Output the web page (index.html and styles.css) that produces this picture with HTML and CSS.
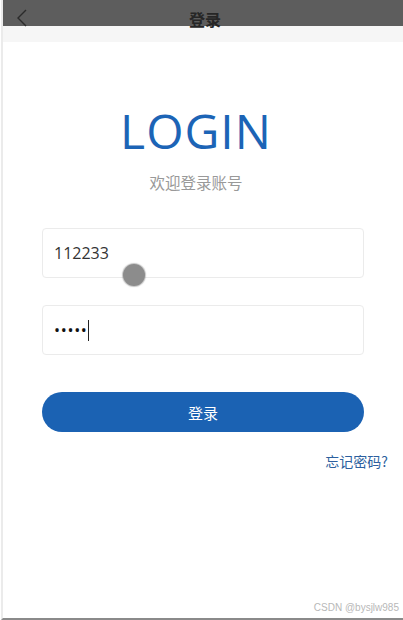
FILE: index.html
```html
<!DOCTYPE html>
<html lang="zh-CN">
<head>
    <meta charset="UTF-8">
    <meta name="viewport" content="width=device-width, initial-scale=1.0">
    <title>登录</title>
    <link rel="stylesheet" href="styles.css">
</head>
<body>

    <div class="page">
        <!-- Top navigation -->
        <div class="nav-bar">
            <svg class="back-icon" width="12" height="18" viewBox="0 0 12 18">
                <polyline points="10,1 2,9 10,17" fill="none" stroke="#2b2b2b" stroke-width="1.4"/>
            </svg>
            <div class="nav-title">登录</div>
        </div>

        <div class="login-box">
            <h1 class="login-title">LOGIN</h1>
            <p class="login-sub">欢迎登录账号</p>

            <div class="field">
                <span class="field-text">112233</span>
                <span class="touch-dot"></span>
            </div>

            <div class="field">
                <span class="field-text dots">•••••</span><span class="caret"></span>
            </div>

            <button class="login-btn">登录</button>

            <div class="forgot">忘记密码?</div>
        </div>

        <div class="watermark">CSDN @bysjlw985</div>
    </div>

</body>
</html>
```

FILE: styles.css
```css
/* Base */
body {
    margin: 0;
    background: #ffffff;
    font-family: "Open Sans", "Noto Sans CJK SC", sans-serif;
}

/* Page frame */
.page {
    height: 618px;
    margin-left: 1px;
    border-left: 2px solid #ebebeb;
    border-bottom: 2px solid #8a8a8a;
    display: flex;
    flex-direction: column;
}

/* Nav bar: dark strip + light strip */
.nav-bar {
    height: 42px;
    background: linear-gradient(#5d5d5d 0, #5d5d5d 26px, #f6f6f6 26px, #f6f6f6 42px);
    display: flex;
    align-items: flex-start;
}

.back-icon {
    margin: 9px 0 0 13px;
}

.nav-title {
    flex: 1;
    text-align: center;
    margin: 7px 21px 0 0;
    font-size: 16px;
    font-weight: bold;
    color: #262626;
    font-family: "Noto Sans CJK SC", sans-serif;
}

/* Login box */
.login-box {
    flex: 1;
    padding: 0 15px;
    display: flex;
    flex-direction: column;
}

.login-title {
    margin: 65px 14px 0 0;
    font-size: 48px;
    line-height: 48px;
    letter-spacing: 1px;
    font-weight: normal;
    color: #1c64b6;
    text-align: center;
}

.login-sub {
    margin: 17px 14px 0 0;
    font-size: 15.5px;
    line-height: 20px;
    color: #999;
    text-align: center;
    font-family: "Noto Sans CJK SC", sans-serif;
}

/* Input fields */
.field {
    position: relative;
    height: 48px;
    margin: 0 24px;
    border: 1px solid #ebebeb;
    border-radius: 4px;
    display: flex;
    align-items: center;
    padding: 0 11px;
}

.login-sub + .field {
    margin-top: 36px;
}

.field + .field {
    margin-top: 27px;
}

.field-text {
    font-size: 16px;
    color: #333;
}

.dots {
    letter-spacing: 0.7px;
    color: #111;
}

.caret {
    width: 1px;
    height: 21px;
    background: #222;
}

/* Touch indicator */
.touch-dot {
    position: absolute;
    left: 80px;
    top: 35px;
    width: 22px;
    height: 22px;
    border-radius: 50%;
    background: #8c8c8c;
    box-shadow: 0 0 1px 1px rgba(140, 140, 140, 0.5);
}

/* Button */
.login-btn {
    margin: 37px 24px 0;
    height: 40px;
    border: none;
    border-radius: 20px;
    background: #1b62b3;
    color: #fff;
    font-size: 15px;
    font-family: "Noto Sans CJK SC", sans-serif;
}

.forgot {
    margin-top: 19px;
    text-align: right;
    font-size: 14px;
    color: #2c5f9e;
    font-family: "Noto Sans CJK SC", sans-serif;
}

/* Watermark */
.watermark {
    text-align: right;
    padding: 0 4px 5px 0;
    font-size: 10px;
    color: #b8b8b8;
    font-family: "Liberation Sans", sans-serif;
}
```
